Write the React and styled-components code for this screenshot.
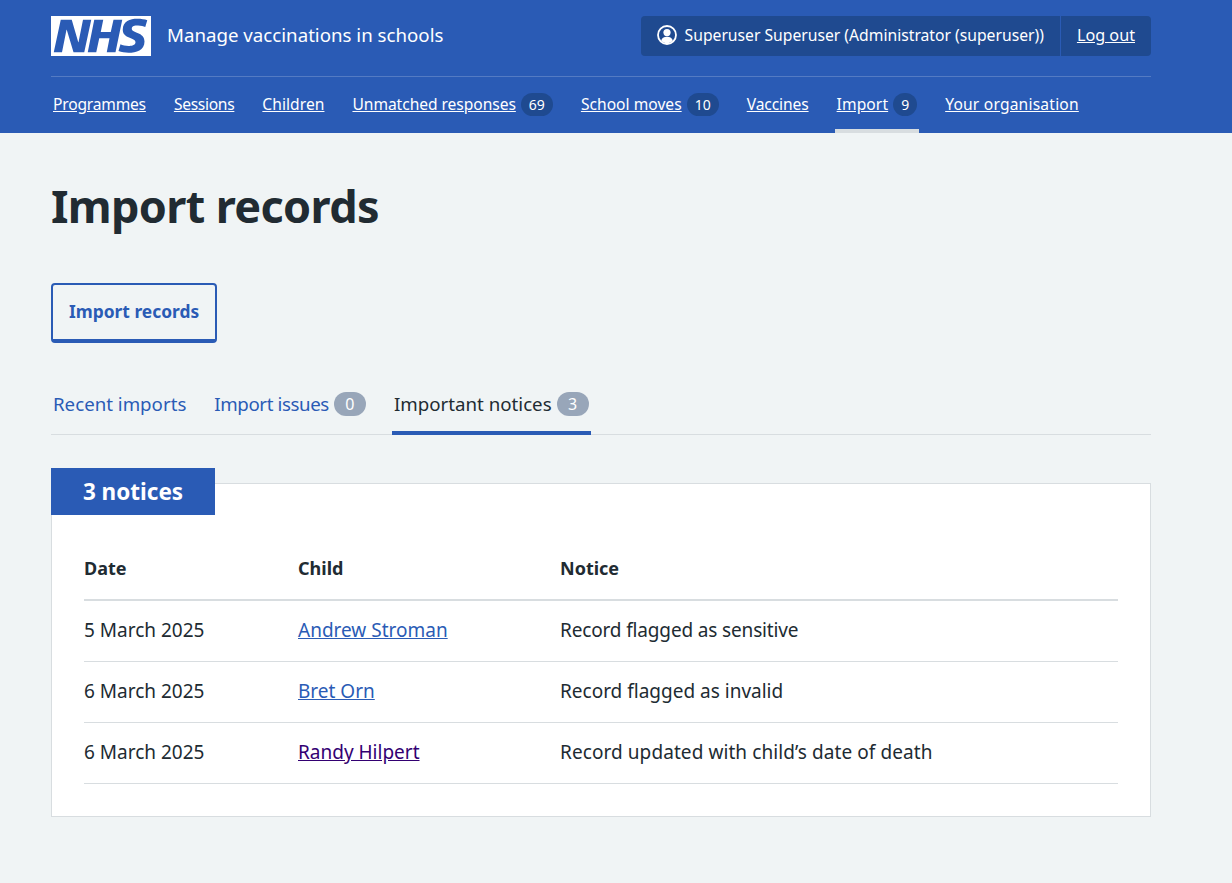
import React from 'react';
import styled, { createGlobalStyle } from 'styled-components';

const GlobalStyle = createGlobalStyle`
  html, body {
    margin: 0;
    padding: 0;
    background: #f0f4f5;
    color: #212b32;
    font-family: "Noto Sans", "Open Sans", Arial, sans-serif;
    font-size: 16px;
  }
`;

const Header = styled.header`
  height: 133px;
  background: #2a5bb5;
  color: #fff;
  padding: 16px 81px 0 51px;
  box-sizing: border-box;
`;

const HeaderTop = styled.div`
  display: flex;
  align-items: center;
  justify-content: space-between;
  height: 40px;
  padding-bottom: 20px;
  border-bottom: 1px solid rgba(255, 255, 255, 0.2);
`;

const Brand = styled.div`
  display: flex;
  align-items: center;
  gap: 16px;
`;

const ServiceName = styled.span`
  font-size: 18.7px;
  line-height: 24px;
  padding-bottom: 2px;
`;

const Account = styled.div`
  display: flex;
  align-items: stretch;
  height: 40px;
  background: #1f4a90;
  border-radius: 4px;
  font-size: 16px;
`;

const AccountUser = styled.div`
  display: flex;
  align-items: center;
  gap: 8px;
  padding: 0 16px 2px;
  font-size: 15.69px;
`;

const LogOut = styled.a`
  display: flex;
  align-items: center;
  padding: 0 16px 2px;
  color: #fff;
  font-size: 16.2px;
  text-decoration: underline;
  border-left: 1px solid #2a5bb5;
`;

const Nav = styled.nav`
  display: flex;
  gap: 24px;
  height: 56px;
`;

const NavItem = styled.a`
  display: flex;
  align-items: center;
  gap: 5px;
  padding: 2px 2px 0;
  height: 56px;
  color: #fff;
  font-size: 15.6px;
  box-sizing: border-box;
  border-bottom: 4px solid ${props => (props.$current ? '#d8dde0' : 'transparent')};
`;

const NavLabel = styled.span`
  text-decoration: underline;
  letter-spacing: ${props => props.$track || 0}px;
`;

const NavCount = styled.span`
  padding: 0 8px;
  height: 23px;
  border-radius: 12px;
  background: #1f4a90;
  font-size: 14px;
  line-height: 23px;
  text-align: center;
`;

const Main = styled.main`
  width: 1100px;
  margin-left: 51px;
  padding-top: 39px;
`;

const Title = styled.h1`
  margin: 0 0 43px;
  font-size: 45px;
  line-height: 68px;
  font-weight: 700;
  letter-spacing: -0.65px;
`;

const SecondaryButton = styled.a`
  display: inline-block;
  box-sizing: border-box;
  height: 60px;
  padding: 0 16px;
  border: 2px solid #2a5bb5;
  border-bottom-width: 4px;
  border-radius: 4px;
  color: #2a5bb5;
  font-size: 17.4px;
  font-weight: 700;
  line-height: 52px;
`;

const Tabs = styled.div`
  display: flex;
  gap: 24px;
  margin-top: 39px;
  height: 52px;
  border-bottom: 1px solid #d8dde0;
`;

const Tab = styled.a`
  display: flex;
  align-items: center;
  gap: 5px;
  box-sizing: border-box;
  height: 53px;
  padding: 0 2px 6px;
  font-size: 18.7px;
  color: ${props => (props.$active ? '#212b32' : '#2a5bb5')};
  border-bottom: 4px solid ${props => (props.$active ? '#2a5bb5' : 'transparent')};
`;

const TabLabel = styled.span`
  letter-spacing: ${props => props.$track || 0}px;
`;

const TabCount = styled.span`
  padding: 0 11.5px;
  height: 24px;
  border-radius: 12px;
  background: #98a6b9;
  color: #fff;
  font-size: 16px;
  line-height: 24px;
`;

const Panel = styled.section`
  position: relative;
  margin-top: 48px;
  padding: 49px 32px 32px;
  background: #fff;
  border: 1px solid #d8dde0;
`;

const PanelHeading = styled.h2`
  position: absolute;
  top: -16px;
  left: -1px;
  margin: 0;
  width: 164px;
  height: 47px;
  background: #2a5bb5;
  color: #fff;
  font-size: 22.5px;
  font-weight: 700;
  line-height: 47px;
  text-align: center;
`;

const Table = styled.table`
  width: 100%;
  border-collapse: collapse;
  table-layout: fixed;
  font-size: 19px;
`;

const HeadCell = styled.th`
  width: ${props => props.$width};
  height: 67px;
  padding: 4px 0 0;
  box-sizing: border-box;
  text-align: left;
  font-size: 18px;
  font-weight: 700;
  border-bottom: 2px solid #d8dde0;
`;

const Cell = styled.td`
  height: 61px;
  padding: 0 0 2px;
  box-sizing: border-box;
  border-bottom: 1px solid #d8dde0;
  letter-spacing: ${props => props.$track || 0}px;
`;

const ChildLink = styled.a`
  color: ${props => (props.$visited ? '#330072' : '#2a5bb5')};
  text-decoration: underline;
`;

const NhsLogo = () => (
  <svg width="100" height="40" viewBox="0 0 40 16" aria-label="NHS">
    <path fill="#fff" d="M0 0h40v16H0z" />
    <path
      fill="#2a5bb5"
      d="M3.9 1.5h4.4l2.6 9h.1l1.8-9h3.3l-2.8 13H9l-2.7-9h-.1l-1.8 9H1.1M17.3 1.5h3.6l-1 4.9h4L25 1.5h3.5l-2.7 13h-3.5l1.1-5.6h-4.1l-1.2 5.6h-3.4M37.7 4.4c-.7-.3-1.6-.6-2.9-.6-1.4 0-2.5.2-2.500 1.300 0 1.800 5.100 1.200 5.100 5.100 0 3.600-3.300 4.500-6.400 4.500-1.300 0-2.900-.3-4-.7l.8-2.700c.7.4 2.100.7 3.200.7s2.800-.2 2.800-1.500c0-2.100-5.100-1.300-5.100-5 0-3.400 2.900-4.400 5.800-4.400 1.600 0 3.100.2 4 .6"
    />
  </svg>
);

const UserIcon = () => (
  <svg width="20" height="20" viewBox="0 0 20 20">
    <circle cx="10" cy="10" r="9" fill="none" stroke="#fff" strokeWidth="1.8" />
    <circle cx="10" cy="7.6" r="3.6" fill="#fff" />
    <path fill="#fff" d="M4.200 15.800c.5-2.800 2.600-4 5.800-4s5.300 1.200 5.800 4c-1.400 1.400-3.500 2.400-5.800 2.400s-4.400-1-5.800-2.400z" />
  </svg>
);

const navItems = [
  { label: 'Programmes', track: -0.2 },
  { label: 'Sessions', track: -0.3 },
  { label: 'Children', track: 0.05 },
  { label: 'Unmatched responses', track: -0.05 },
  { label: 'School moves', track: 0.02 },
  { label: 'Vaccines', track: -0.1 },
  { label: 'Import', track: 0.1 },
  { label: 'Your organisation', track: 0.2 },
];

const navCounts = { 'Unmatched responses': 69, 'School moves': 10, Import: 9 };

const notices = [
  { date: '5 March 2025', child: 'Andrew Stroman', notice: 'Record flagged as sensitive', track: -0.15 },
  { date: '6 March 2025', child: 'Bret Orn', notice: 'Record flagged as invalid', track: 0 },
  { date: '6 March 2025', child: 'Randy Hilpert', notice: 'Record updated with child’s date of death', track: 0.08, visited: true },
];

export default function App() {
  return (
    <>
      <GlobalStyle />
      <Header>
        <HeaderTop>
          <Brand>
            <NhsLogo />
            <ServiceName>Manage vaccinations in schools</ServiceName>
          </Brand>
          <Account>
            <AccountUser>
              <UserIcon />
              Superuser Superuser (Administrator (superuser))
            </AccountUser>
            <LogOut>Log out</LogOut>
          </Account>
        </HeaderTop>
        <Nav>
          {navItems.map(item => (
            <NavItem key={item.label} $current={item.label === 'Import'}>
              <NavLabel $track={item.track}>{item.label}</NavLabel>
              {navCounts[item.label] !== undefined && <NavCount>{navCounts[item.label]}</NavCount>}
            </NavItem>
          ))}
        </Nav>
      </Header>
      <Main>
        <Title>Import records</Title>
        <SecondaryButton>Import records</SecondaryButton>
        <Tabs>
          <Tab>
            <TabLabel>Recent imports</TabLabel>
          </Tab>
          <Tab>
            <TabLabel $track={-0.4}>Import issues</TabLabel>
            <TabCount>0</TabCount>
          </Tab>
          <Tab $active>
            <TabLabel>Important notices</TabLabel>
            <TabCount>3</TabCount>
          </Tab>
        </Tabs>
        <Panel>
          <PanelHeading>3 notices</PanelHeading>
          <Table>
            <thead>
              <tr>
                <HeadCell $width="214px">Date</HeadCell>
                <HeadCell $width="262px">Child</HeadCell>
                <HeadCell>Notice</HeadCell>
              </tr>
            </thead>
            <tbody>
              {notices.map(row => (
                <tr key={row.child}>
                  <Cell>{row.date}</Cell>
                  <Cell>
                    <ChildLink $visited={row.visited}>{row.child}</ChildLink>
                  </Cell>
                  <Cell $track={row.track}>{row.notice}</Cell>
                </tr>
              ))}
            </tbody>
          </Table>
        </Panel>
      </Main>
    </>
  );
}
